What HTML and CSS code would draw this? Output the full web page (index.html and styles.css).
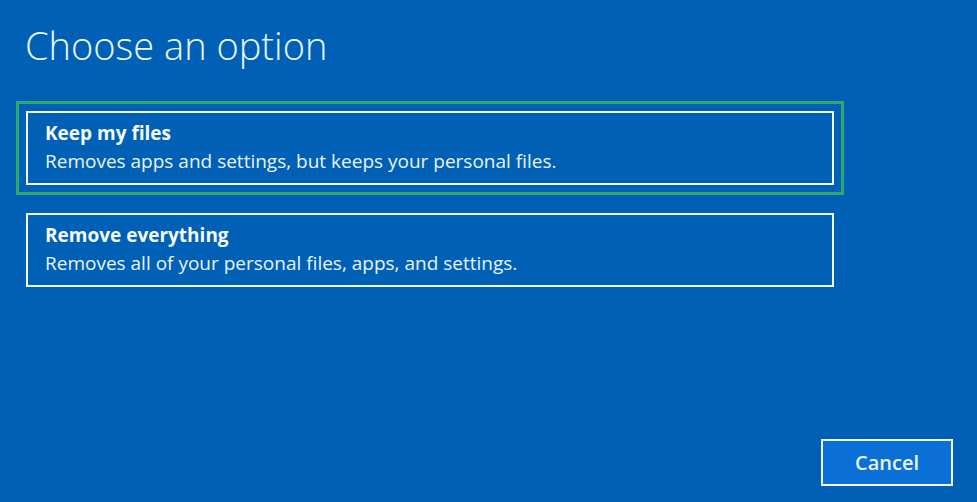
FILE: index.html
```html
<!DOCTYPE html>
<html lang="en">
<head>
    <meta charset="UTF-8">
    <meta name="viewport" content="width=device-width, initial-scale=1.0">
    <title>Choose an option</title>
    <link rel="stylesheet" href="styles.css">
</head>
<body>
    <div class="screen">
        <p class="title">Choose an option</p>

        <div class="options">
            <div class="focus-ring">
                <button class="option-button">
                    <span class="option-name">Keep my files</span>
                    <span class="option-text">Removes apps and settings, but keeps your personal files.</span>
                </button>
            </div>
            <div class="plain-ring">
                <button class="option-button">
                    <span class="option-name">Remove everything</span>
                    <span class="option-text">Removes all of your personal files, apps, and settings.</span>
                </button>
            </div>
        </div>

        <div class="footer">
            <button class="cancel-button">Cancel</button>
        </div>
    </div>
</body>
</html>
```

FILE: styles.css
```css
html, body {
    margin: 0;
    height: 100%;
}

body {
    font-family: "Open Sans", "Noto Sans", sans-serif;
    background-color: #0060b5;
    color: #e8f4ff;
}

.screen {
    height: 100%;
    box-sizing: border-box;
    display: flex;
    flex-direction: column;
    padding: 0 24px 16px 16px;
}

.title {
    font-size: 38px;
    font-weight: 300;
    margin: 21px 0 0 9px;
    line-height: 48px;
    color: #e8f6ff;
}

.options {
    display: flex;
    flex-direction: column;
    gap: 8px;
    margin-top: 32px;
}

.focus-ring,
.plain-ring {
    width: 828px;
    padding: 7px;
    box-sizing: border-box;
    border: 3px solid transparent;
}

.focus-ring {
    border-color: #2ea86c;
}

.option-button {
    display: flex;
    flex-direction: column;
    align-items: flex-start;
    width: 100%;
    height: 74px;
    padding: 6px 17px 0;
    box-sizing: border-box;
    border: 2px solid #f2f8ff;
    background-color: #0060b5;
    color: #e8f4ff;
    font-family: inherit;
    text-align: left;
    cursor: pointer;
}

.option-name {
    font-size: 19px;
    font-weight: 700;
    line-height: 28px;
    color: #f4faff;
}

.option-text {
    font-size: 19px;
    line-height: 28px;
}

.footer {
    margin-top: auto;
    display: flex;
    justify-content: flex-end;
}

.cancel-button {
    width: 132px;
    height: 47px;
    border: 2px solid #f2f8ff;
    background-color: #0a70d6;
    color: #e8f4ff;
    font-family: inherit;
    font-size: 20px;
    font-weight: 600;
    cursor: pointer;
}
```
